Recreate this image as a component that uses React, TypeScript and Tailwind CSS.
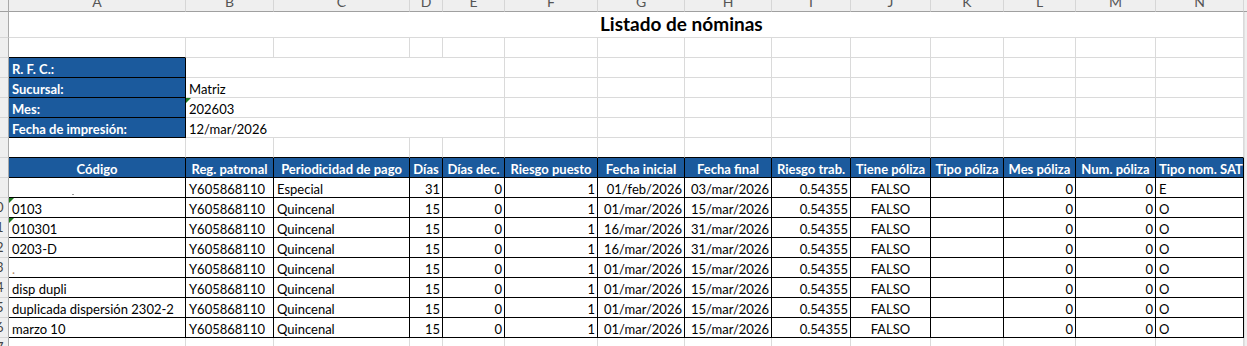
import React from "react";

// Column template shared by every sheet row: row header, A..N, scrollbar gutter
const GRID =
  "grid grid-cols-[9px_177px_88px_136px_33px_62px_93px_87px_87px_79px_80px_73px_72px_80px_88px_1fr]";

const LETTERS = ["A", "B", "C", "D", "E", "F", "G", "H", "I", "J", "K", "L", "M", "N"];

const HEADERS = [
  "Código",
  "Reg. patronal",
  "Periodicidad de pago",
  "Días",
  "Días dec.",
  "Riesgo puesto",
  "Fecha inicial",
  "Fecha final",
  "Riesgo trab.",
  "Tiene póliza",
  "Tipo póliza",
  "Mes póliza",
  "Num. póliza",
  "Tipo nom. SAT",
];

type Align = "l" | "r" | "c";
const ALIGN: Align[] = ["l", "l", "l", "r", "r", "r", "r", "r", "r", "c", "l", "r", "r", "l"];

const ROWS: string[][] = [
  ["", "Y605868110", "Especial", "31", "0", "1", "01/feb/2026", "03/mar/2026", "0.54355", "FALSO", "", "0", "0", "E"],
  ["0103", "Y605868110", "Quincenal", "15", "0", "1", "01/mar/2026", "15/mar/2026", "0.54355", "FALSO", "", "0", "0", "O"],
  ["010301", "Y605868110", "Quincenal", "15", "0", "1", "16/mar/2026", "31/mar/2026", "0.54355", "FALSO", "", "0", "0", "O"],
  ["0203-D", "Y605868110", "Quincenal", "15", "0", "1", "16/mar/2026", "31/mar/2026", "0.54355", "FALSO", "", "0", "0", "O"],
  [".", "Y605868110", "Quincenal", "15", "0", "1", "01/mar/2026", "15/mar/2026", "0.54355", "FALSO", "", "0", "0", "O"],
  ["disp dupli", "Y605868110", "Quincenal", "15", "0", "1", "01/mar/2026", "15/mar/2026", "0.54355", "FALSO", "", "0", "0", "O"],
  ["duplicada dispersión 2302-2", "Y605868110", "Quincenal", "15", "0", "1", "01/mar/2026", "15/mar/2026", "0.54355", "FALSO", "", "0", "0", "O"],
  ["marzo 10", "Y605868110", "Quincenal", "15", "0", "1", "01/mar/2026", "15/mar/2026", "0.54355", "FALSO", "", "0", "0", "O"],
];

const INFO = [
  { label: "R. F. C.:", value: "" },
  { label: "Sucursal:", value: "Matriz" },
  { label: "Mes:", value: "202603", flag: true },
  { label: "Fecha de impresión:", value: "12/mar/2026" },
];

const BLUE = "bg-[#1b5a9d]";

function alignClass(a: Align) {
  if (a === "r") return "justify-end pr-[2px]";
  if (a === "c") return "justify-center";
  return "justify-start pl-[3px]";
}

/** green "number stored as text" marker in a cell's corner */
function Flag() {
  return (
    <span className="absolute top-0 left-0 w-0 h-0 border-t-[5px] border-t-[#1f7a1f] border-r-[5px] border-r-transparent" />
  );
}

function RowHead({ n }: { n: number }) {
  return (
    <div className="flex justify-end items-end overflow-hidden bg-[#efefef] border-r border-b border-r-[#a9a9a9] border-b-[#d6d6d6] pb-[2px]">
      <span className="w-[30px] shrink-0 mr-[-3px] text-center leading-[16px] text-[13px] text-[#444]">{n}</span>
    </div>
  );
}

function Gutter() {
  return <div className="bg-[#f0f0f0] border-l border-l-[#e2e2e2]" />;
}

function Blank({ cls = "" }: { cls?: string }) {
  return <div className={`border-r border-b border-[#dadada] ${cls}`} />;
}

export default function App() {
  return (
    <div className="w-[1247px] h-[346px] overflow-hidden bg-white font-['Lato','Liberation_Sans',sans-serif] text-black">
      {/* column letters */}
      <div className={`${GRID} h-[12px]`}>
        <div className="bg-[#efefef] border-r border-b border-r-[#a9a9a9] border-b-[#a0a0a0]" />
        {LETTERS.map((l) => (
          <div
            key={l}
            className="flex items-end justify-center overflow-hidden bg-[#efefef] border-r border-b border-r-[#d6d6d6] border-b-[#a0a0a0]"
          >
            <span className="leading-[14px] mb-[2px] text-[14px] text-[#555]">{l}</span>
          </div>
        ))}
        <div className="bg-[#f0f0f0] border-b border-b-[#a0a0a0]" />
      </div>

      {/* row 1: title */}
      <div className={`${GRID} h-[26px]`}>
        <RowHead n={1} />
        <div className="col-span-14 flex items-end border-r border-b border-[#dadada]">
          <span className="ml-[591px] mb-[3px] leading-[20px] text-[19px] font-bold">Listado de nóminas</span>
        </div>
        <Gutter />
      </div>

      {/* row 2 */}
      <div className={`${GRID} h-[20px]`}>
        <RowHead n={2} />
        <Blank cls="!border-b-black" />
        {LETTERS.slice(1).map((l) => (
          <Blank key={l} />
        ))}
        <Gutter />
      </div>

      {/* rows 3-6: header info block */}
      {INFO.map((it, i) => (
        <div key={it.label} className={`${GRID} h-[20px]`}>
          <RowHead n={3 + i} />
          <div
            className={`flex items-end pl-[3px] border-r border-b border-black ${BLUE} text-white font-bold text-[13px] leading-[16px]`}
          >
            {it.label}
          </div>
          <div className="relative col-span-4 flex items-end pl-[3px] border-r border-b border-[#dadada] text-[13px] leading-[16px]">
            {it.flag && <Flag />}
            {it.value}
          </div>
          {LETTERS.slice(5).map((l) => (
            <Blank key={l} />
          ))}
          <Gutter />
        </div>
      ))}

      {/* row 7: spacer above the table */}
      <div className={`${GRID} h-[20px]`}>
        <RowHead n={7} />
        {LETTERS.map((l) => (
          <Blank key={l} cls="!border-b-black" />
        ))}
        <Gutter />
      </div>

      {/* row 8: table header */}
      <div className={`${GRID} h-[20px]`}>
        <RowHead n={8} />
        {HEADERS.map((h, i) => (
          <div
            key={h}
            className={`flex items-end overflow-hidden whitespace-nowrap border-r border-b border-black ${BLUE} text-white font-bold text-[13px] leading-[16px] ${
              i === 13 ? "justify-start pl-[3px]" : "justify-center"
            }`}
          >
            {h}
          </div>
        ))}
        <Gutter />
      </div>

      {/* rows 9-16: payroll list */}
      {ROWS.map((r, ri) => (
        <div key={ri} className={`${GRID} h-[20px]`}>
          <RowHead n={9 + ri} />
          {r.map((v, ci) => (
            <div
              key={ci}
              className={`relative flex items-end overflow-hidden whitespace-nowrap border-r border-b border-black text-[13px] leading-[16px] ${alignClass(
                ALIGN[ci]
              )}`}
            >
              {ci === 0 && (ri === 1 || ri === 2) && <Flag />}
              {ci === 0 && ri === 0 && (
                <span className="absolute left-[63px] bottom-[2px] w-[2px] h-[1px] bg-[#9a9a9a]" />
              )}
              {ci === 0 && v === "." ? <span className="text-[#b08a6a]">.</span> : v}
            </div>
          ))}
          <Gutter />
        </div>
      ))}

      {/* row 17 */}
      <div className={`${GRID} h-[20px]`}>
        <RowHead n={17} />
        {LETTERS.map((l) => (
          <Blank key={l} />
        ))}
        <Gutter />
      </div>
    </div>
  );
}
